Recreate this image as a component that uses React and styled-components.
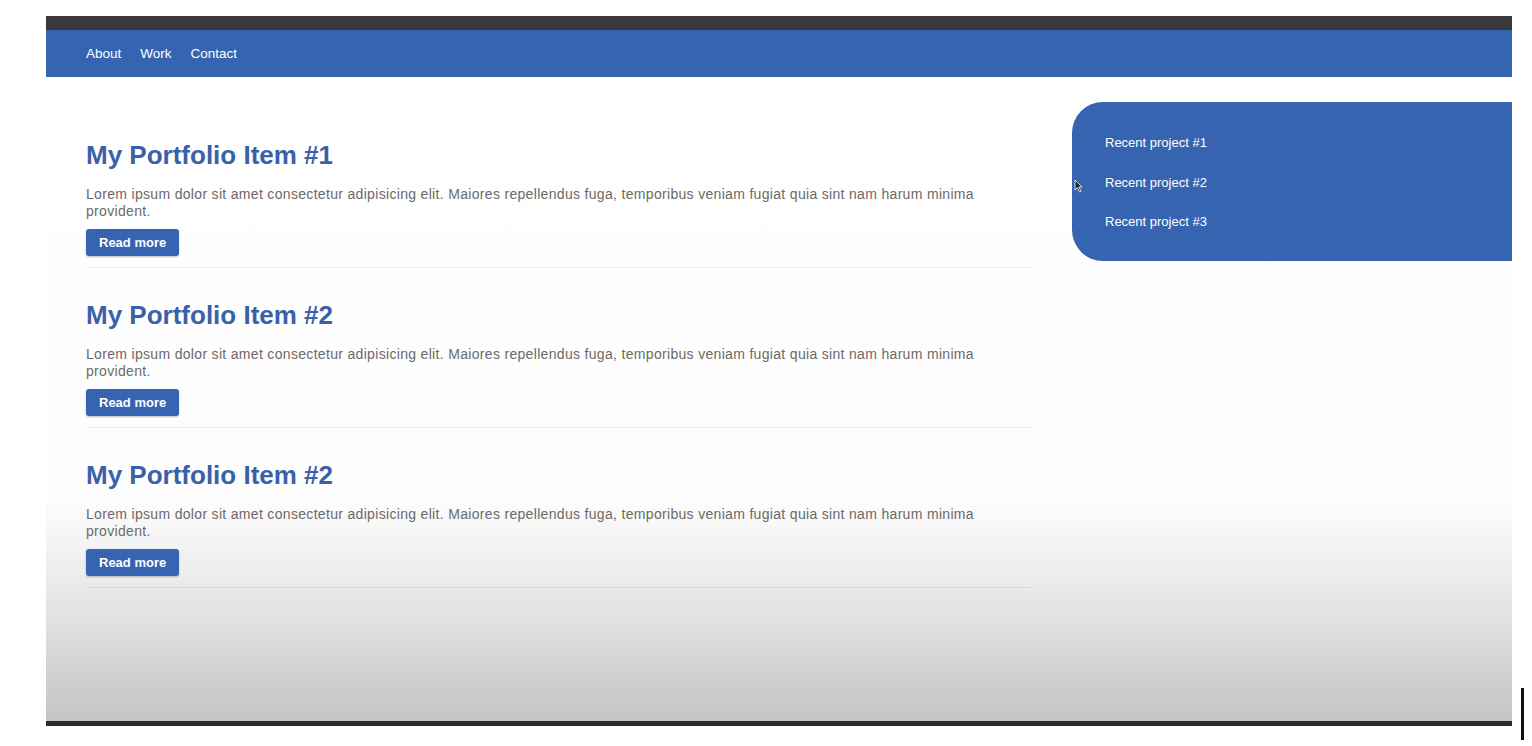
import React from 'react'
import styled, { createGlobalStyle } from 'styled-components'

const GlobalStyle = createGlobalStyle`
  html, body {
    margin: 0;
    padding: 0;
    background: #ffffff;
  }
  body {
    font-family: 'Liberation Sans', Arial, sans-serif;
    overflow: hidden;
  }
  * {
    box-sizing: border-box;
  }
`

const Frame = styled.div`
  position: relative;
  width: 1532px;
  height: 746px;
  padding: 16px 0 0 46px;
`

const Screen = styled.div`
  width: 1466px;
  height: 710px;
  border-top: 14px solid #38383d;
  border-bottom: 5px solid #2c2c31;
  background: linear-gradient(
    180deg,
    #ffffff 0px,
    #fdfdfd 470px,
    #e9e9e9 560px,
    #c4c4c4 691px
  );
  display: flex;
  flex-direction: column;
`

const Nav = styled.nav`
  height: 47px;
  flex-shrink: 0;
  background: #3764b0;
  display: flex;
  align-items: center;
  gap: 19px;
  padding-left: 40px;
`

const NavLink = styled.a`
  color: #ffffff;
  font-size: 13.5px;
  text-decoration: none;
`

const Body = styled.div`
  display: grid;
  grid-template-columns: 944px 1fr;
  column-gap: 42px;
  padding: 25px 0 0 40px;
`

const Items = styled.main`
  padding-top: 38px;
`

const Item = styled.article`
  padding-bottom: 11px;
  margin-bottom: 32px;
  border-bottom: 1px solid rgba(0, 0, 0, 0.07);
`

const Title = styled.h2`
  margin: 0;
  font-size: 26px;
  line-height: 31px;
  font-weight: 700;
  color: #3a61a8;
`

const Text = styled.p`
  margin: 15px 0 0;
  font-size: 14px;
  line-height: 17px;
  letter-spacing: 0.32px;
  color: #6a6a6a;
`

const ReadMore = styled.button`
  display: block;
  margin-top: 9px;
  height: 27px;
  padding: 0 13px;
  border: none;
  border-radius: 3px;
  background: #3764b0;
  color: #ffffff;
  font-family: 'Liberation Sans', Arial, sans-serif;
  font-size: 13px;
  font-weight: 700;
  box-shadow: 0 1px 2px rgba(0, 0, 0, 0.25);
  cursor: pointer;
`

const Sidebar = styled.aside`
  height: 159px;
  background: #3764b0;
  border-radius: 31px 0 0 31px;
  padding: 21px 0 0 33px;
`

const RecentList = styled.ul`
  list-style: none;
  margin: 0;
  padding: 0;
`

const RecentLink = styled.li`
  color: #ffffff;
  font-size: 13px;
  line-height: 39.5px;
`

const Pointer = styled.svg`
  position: absolute;
  left: 1074px;
  top: 179px;
`

const TextCursor = styled.div`
  position: absolute;
  left: 1521px;
  top: 688px;
  width: 3px;
  height: 52px;
  background: #111111;
`

const items = ['My Portfolio Item #1', 'My Portfolio Item #2', 'My Portfolio Item #2']
const lorem =
  'Lorem ipsum dolor sit amet consectetur adipisicing elit. Maiores repellendus fuga, temporibus veniam fugiat quia sint nam harum minima provident.'

export default function App() {
  return (
    <>
      <GlobalStyle />
      <Frame>
        <Screen>
          <Nav>
            <NavLink href="#">About</NavLink>
            <NavLink href="#">Work</NavLink>
            <NavLink href="#">Contact</NavLink>
          </Nav>
          <Body>
            <Items>
              {items.map((title, i) => (
                <Item key={i}>
                  <Title>{title}</Title>
                  <Text>{lorem}</Text>
                  <ReadMore>Read more</ReadMore>
                </Item>
              ))}
            </Items>
            <Sidebar>
              <RecentList>
                <RecentLink>Recent project #1</RecentLink>
                <RecentLink>Recent project #2</RecentLink>
                <RecentLink>Recent project #3</RecentLink>
              </RecentList>
            </Sidebar>
          </Body>
        </Screen>
        <Pointer width="9" height="14" viewBox="0 0 9 14">
          <path d="M1 1 L1 11 L3.5 8.5 L5.5 13 L7 12.3 L5 8 L8 8 Z" fill="#222" stroke="#fff" strokeWidth="0.8" />
        </Pointer>
        <TextCursor />
      </Frame>
    </>
  )
}
